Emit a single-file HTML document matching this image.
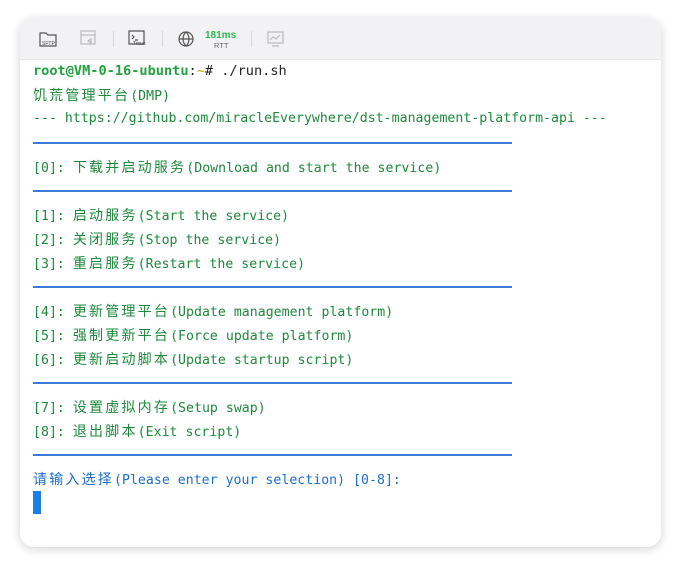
<!DOCTYPE html>
<html><head><meta charset="utf-8"><style>
body{margin:0;width:680px;height:565px;background:#fff;overflow:hidden;position:relative;font-family:"DejaVu Sans Mono","Noto Sans CJK SC",monospace;}
.card{position:absolute;left:20px;top:18px;width:641px;height:529px;background:#fff;border-radius:14px;box-shadow:0 2px 10px rgba(0,0,0,.18);overflow:hidden}
.bar{position:absolute;left:0;top:0;width:100%;height:41px;background:#f2f2f4;border-bottom:1px solid #e6e6e8}
.l{position:absolute;left:33px;height:24px;line-height:24px;font-size:13.2px;letter-spacing:0.03px;color:#1c8a3c;white-space:pre}
.c{font-family:"Noto Sans CJK SC",sans-serif;font-size:14px;letter-spacing:2.2px}
.sep{position:absolute;left:33px;width:479px;height:2px;background:#3a7bd5}
.b{color:#1a6fcf}
.sep2{position:absolute;width:1px;height:16px;top:31px;background:#d6d6d8}
</style></head><body>
<div class="card"><div class="bar"></div></div>
<svg style="position:absolute;left:0;top:0" width="680" height="60">
<g fill="none" stroke="#555" stroke-width="1.2">
<path d="M40 33h6l2 2h8v11H40z"/>
<path d="M81 31h14v13H81z" stroke="#bbb"/><path d="M81 35h14" stroke="#bbb"/><path d="M88 41l3-2v4z" stroke="#bbb"/>
<path d="M129 31h15v13h-15z"/><path d="M132 35l2 2-2 2M135 40h3"/>
<circle cx="186" cy="39" r="7"/><path d="M179 39h14M186 32c-4 4-4 10 0 14M186 32c4 4 4 10 0 14"/>
<path d="M268 32h15v11h-15zM272 46h7M270 40l3-3 3 2 4-4" stroke="#bbb"/>
</g>
<g font-family="Liberation Sans" fill="#444"><text x="42" y="45" font-size="5">SFTP</text><text x="133" y="45" font-size="5">Tmux</text></g>
<text x="205" y="38" font-family="Liberation Sans" font-size="10" font-weight="bold" fill="#2db84d">181ms</text>
<text x="214" y="48" font-family="Liberation Sans" font-size="7.5" fill="#666">RTT</text>
</svg>
<div class="sep2" style="left:113px"></div><div class="sep2" style="left:162px"></div><div class="sep2" style="left:251px"></div>

<div class="l" style="top:59px;font-size:13.6px;letter-spacing:0"><b style="color:#22a33f">root@VM-0-16-ubuntu</b><span style="color:#222">:</span><span style="color:#c8a000">~</span><span style="color:#222"># ./run.sh</span></div>
<div class="l" style="top:83px"><span class="c">饥荒管理平台</span>(DMP)</div>
<div class="l" style="top:107px">--- https://github.com/miracleEverywhere/dst-management-platform-api ---</div>
<div class="sep" style="top:142px"></div>
<div class="l" style="top:155px">[0]: <span class="c">下载并启动服务</span>(Download and start the service)</div>
<div class="sep" style="top:190px"></div>
<div class="l" style="top:203px">[1]: <span class="c">启动服务</span>(Start the service)</div>
<div class="l" style="top:227px">[2]: <span class="c">关闭服务</span>(Stop the service)</div>
<div class="l" style="top:251px">[3]: <span class="c">重启服务</span>(Restart the service)</div>
<div class="sep" style="top:286px"></div>
<div class="l" style="top:299px">[4]: <span class="c">更新管理平台</span>(Update management platform)</div>
<div class="l" style="top:323px">[5]: <span class="c">强制更新平台</span>(Force update platform)</div>
<div class="l" style="top:347px">[6]: <span class="c">更新启动脚本</span>(Update startup script)</div>
<div class="sep" style="top:382px"></div>
<div class="l" style="top:395px">[7]: <span class="c">设置虚拟内存</span>(Setup swap)</div>
<div class="l" style="top:419px">[8]: <span class="c">退出脚本</span>(Exit script)</div>
<div class="sep" style="top:454px"></div>
<div class="l b" style="top:467px"><span class="c">请输入选择</span>(Please enter your selection) [0-8]:</div>
<div style="position:absolute;left:33px;top:491px;width:8px;height:23px;background:#1a7fe8"></div>
</body></html>
